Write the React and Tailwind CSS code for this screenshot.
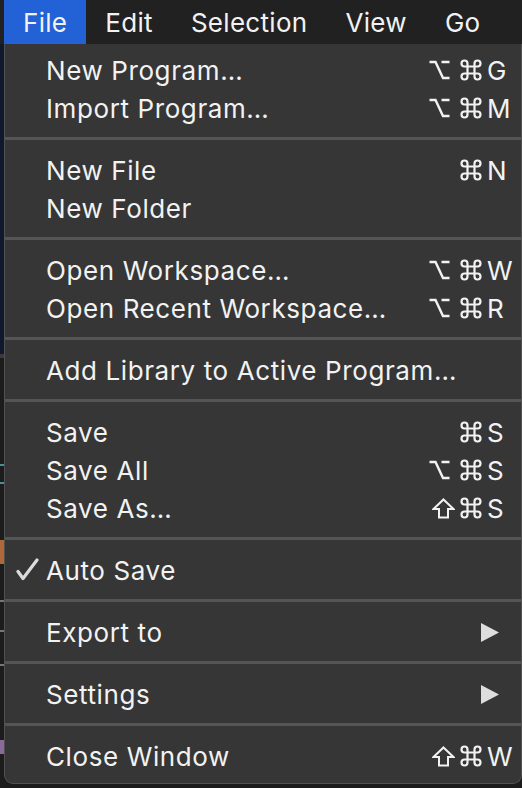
import React from "react";

const groups = [
  [
    { label: "New Program…", mods: ["opt", "cmd"], k: "G" },
    { label: "Import Program…", mods: ["opt", "cmd"], k: "M" },
  ],
  [{ label: "New File", mods: ["cmd"], k: "N" }, { label: "New Folder" }],
  [
    { label: "Open Workspace…", mods: ["opt", "cmd"], k: "W" },
    { label: "Open Recent Workspace…", mods: ["opt", "cmd"], k: "R" },
  ],
  [{ label: "Add Library to Active Program…" }],
  [
    { label: "Save", mods: ["cmd"], k: "S" },
    { label: "Save All", mods: ["opt", "cmd"], k: "S" },
    { label: "Save As…", mods: ["shift", "cmd"], k: "S" },
  ],
  [{ label: "Auto Save", checked: true }],
  [{ label: "Export to", submenu: true }],
  [{ label: "Settings", submenu: true }],
  [{ label: "Close Window", mods: ["shift", "cmd"], k: "W" }],
];

const titles = ["File", "Edit", "Selection", "View", "Go"];

export default function App() {
  return (
    <div
      className="w-[522px] h-[788px] overflow-hidden bg-[#1b1b1b] text-[#f2f2f2] tracking-[0.6px]"
      style={{ fontFamily: "Inter, 'DejaVu Sans', sans-serif" }}
    >
      {/* menu bar */}
      <div className="flex h-[44px] bg-[#212121] pl-[4px] text-[26px] tracking-[0.3px]">
        {titles.map((t, i) => (
          <div
            key={t}
            className={`flex items-center px-[19px] ${i === 0 ? "bg-[#2361d6]" : ""}`}
          >
            {t}
          </div>
        ))}
      </div>

      <div className="flex h-[744px]">
        {/* bits of the window behind */}
        <div className="flex w-[4px] flex-col">
          <div className="h-[310px] bg-[#0e1a2b]" />
          <div className="h-[4px] bg-[#3a3a3a]" />
          <div className="h-[106px] bg-[#1c1c1c]" />
          <div className="h-[2px] bg-[#4c8f93]" />
          <div className="h-[16px] bg-[#1c1c1c]" />
          <div className="h-[2px] bg-[#4c8f93]" />
          <div className="h-[56px] bg-[#1c1c1c]" />
          <div className="h-[24px] bg-[#b0683a]" />
          <div className="h-[36px] bg-[#1c1c1c]" />
          <div className="h-[2px] bg-[#777]" />
          <div className="h-[28px] bg-[#1c1c1c]" />
          <div className="h-[2px] bg-[#777]" />
          <div className="h-[32px] bg-[#1c1c1c]" />
          <div className="h-[2px] bg-[#777]" />
          <div className="h-[74px] bg-[#1c1c1c]" />
          <div className="h-[14px] bg-[#8a6a99]" />
          <div className="flex-1 bg-[#1c1c1c]" />
        </div>

        <div className="flex-1 flex flex-col">
          <div className="h-[740px] rounded-b-[9px] border-x border-b border-[#515151] bg-[#363636] pt-[7px] text-[26px]">
            {groups.map((g, gi) => (
              <div key={gi}>
                {gi > 0 && (
                  <div className="pt-[10px] pb-[11px]">
                    <div className="h-[3px] bg-[#555555]" />
                  </div>
                )}
                {g.map((item) => (
                  <MenuItem key={item.label} {...item} />
                ))}
              </div>
            ))}
          </div>
        </div>
      </div>
    </div>
  );
}

function ModIcon({ type }) {
  if (type === "cmd") {
    return (
      <div className="w-[24px] flex justify-start">
        <svg width="22" height="22" viewBox="0 0 22 22" fill="none" stroke="#f2f2f2" strokeWidth="2.2">
          <path d="M7.5 7.5 V4.5 A3 3 0 1 0 4.5 7.5 H17.5 A3 3 0 1 0 14.5 4.5 V17.5 A3 3 0 1 0 17.5 14.5 H4.5 A3 3 0 1 0 7.5 17.5 Z" />
        </svg>
      </div>
    );
  }
  if (type === "opt") {
    return (
      <div className="w-[32px] flex justify-start pl-[1px]">
        <svg width="21" height="20" viewBox="0 0 21 20" fill="none" stroke="#f2f2f2" strokeWidth="2.4">
          <path d="M0.5 2 H6.5 L14 18 H20.5 M12.5 2 H20.5" />
        </svg>
      </div>
    );
  }
  return (
    <div className="w-[32px] flex justify-end pr-[5px]">
      <svg width="23" height="21" viewBox="0 0 23 21" fill="none" stroke="#f2f2f2" strokeWidth="2" strokeLinejoin="miter">
        <path d="M11.5 1.5 L21.5 11 H16 V19.5 H7 V11 H1.5 Z" />
      </svg>
    </div>
  );
}

function MenuItem({ label, mods, k, checked, submenu }) {
  return (
    <div className="relative flex h-[38px] items-center pl-[41px] pr-[4px]">
      {checked && (
        <svg
          className="absolute left-[11px] top-[7px]"
          width="23"
          height="23"
          viewBox="0 0 23 23"
          fill="none"
          stroke="#dcdcdc"
          strokeWidth="3.2"
          strokeLinecap="round"
          strokeLinejoin="round"
        >
          <path d="M2 13.5 L7 20.5 L21 2" />
        </svg>
      )}
      <div className="flex-1 whitespace-nowrap">{label}</div>
      {mods && (
        <div className="flex items-center">
          <div className="flex items-center mr-[3px]">
            {mods.map((m, i) => (
              <ModIcon key={i} type={m} />
            ))}
          </div>
          <span className="w-[30px] tracking-normal">{k}</span>
        </div>
      )}
      {submenu && (
        <svg className="mr-[18px]" width="18" height="19" viewBox="0 0 18 19">
          <path d="M0 0 L18 9.5 L0 19 Z" fill="#dedede" />
        </svg>
      )}
    </div>
  );
}
